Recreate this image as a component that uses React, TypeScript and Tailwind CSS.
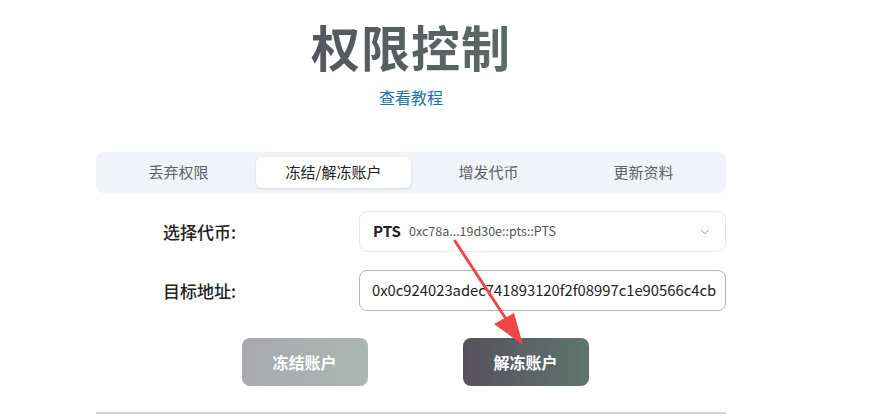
import { ChevronDown } from "lucide-react";

const tabs = ["丢弃权限", "冻结/解冻账户", "增发代币", "更新资料"];

export default function App() {
  return (
    <div
      className="relative h-[417px] w-[875px] overflow-hidden bg-white"
      style={{ fontFamily: '"Noto Sans CJK SC", "Noto Sans", sans-serif' }}
    >
      <div className="ml-[96px] w-[630px] pt-[14px]">
        <h1 className="mx-auto w-fit bg-gradient-to-r from-[#55565d] to-[#5b6a66] bg-clip-text text-center text-[49px] font-bold leading-[64px] tracking-[1px] text-transparent">
          权限控制
        </h1>
        <div className="mt-[7px] text-center text-[16px] leading-[24px] text-[#1b74a6]">
          查看教程
        </div>

        <div className="mt-[43px] flex h-[41px] rounded-lg bg-[#f0f3f8] p-[5px]">
          {tabs.map((t, i) => (
            <div
              key={t}
              className={
                i === 1
                  ? "flex flex-1 items-center justify-center rounded-md bg-white text-[15px] text-[#222] shadow-sm"
                  : "flex flex-1 items-center justify-center text-[15px] text-[#5f6068]"
              }
            >
              {t}
            </div>
          ))}
        </div>

        <div className="mt-[18px] flex items-center">
          <div className="w-[263px] pl-[67px] text-[17px] font-medium text-[#222]">选择代币:</div>
          <div className="flex h-[41px] flex-1 items-center rounded-lg border border-[#e8e8e8] px-[13px]">
            <span className="text-[15px] font-bold text-[#222]">PTS</span>
            <span className="ml-[8px] text-[12.5px] text-[#555]">0xc78a...19d30e::pts::PTS</span>
            <ChevronDown className="ml-auto h-[14px] w-[14px] text-[#888]" strokeWidth={1.5} />
          </div>
        </div>

        <div className="mt-[18px] flex items-center">
          <div className="w-[263px] pl-[67px] text-[17px] font-medium text-[#222]">目标地址:</div>
          <div className="flex h-[41px] flex-1 items-center overflow-hidden rounded-lg border border-[#b3b3b3] px-[12px]">
            <span className="whitespace-nowrap text-[14.8px] text-[#222]">
              0x0c924023adec741893120f2f08997c1e90566c4cb
            </span>
          </div>
        </div>

        <div className="mt-[27px] flex justify-center gap-[95px] pl-[8px]">
          <button className="h-[48px] w-[126px] rounded-lg bg-gradient-to-r from-[#a9a8ae] to-[#aab7b1] text-[16px] font-bold text-white">
            冻结账户
          </button>
          <button className="h-[48px] w-[126px] rounded-lg bg-gradient-to-r from-[#56505e] to-[#5e756c] text-[16px] font-bold text-white">
            解冻账户
          </button>
        </div>

        <div className="mt-[26px] h-[2px] bg-[#d4d4d4]" />
      </div>

      <svg className="pointer-events-none absolute left-0 top-0" width="875" height="417">
        <line x1="455" y1="241" x2="508" y2="322" stroke="#ef4747" strokeWidth="3" strokeLinecap="round" />
        <polygon points="523,345 494,324 514,313" fill="#ef4747" />
      </svg>
    </div>
  );
}
